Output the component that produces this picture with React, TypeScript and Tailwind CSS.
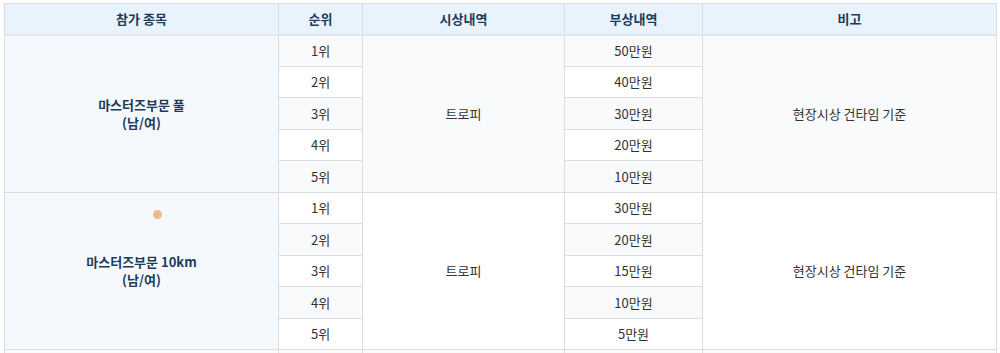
import React from 'react';

interface Group {
  name: string;
  sub: string;
  prize: string;
  amounts: string[];
  note: string;
  dot?: boolean;
}

const groups: Group[] = [
  {
    name: '마스터즈부문 풀',
    sub: '(남/여)',
    prize: '트로피',
    amounts: ['50만원', '40만원', '30만원', '20만원', '10만원'],
    note: '현장시상 건타임 기준',
  },
  {
    name: '마스터즈부문 10km',
    sub: '(남/여)',
    prize: '트로피',
    amounts: ['30만원', '20만원', '15만원', '10만원', '5만원'],
    note: '현장시상 건타임 기준',
    dot: true,
  },
];

const font = { fontFamily: '"Noto Sans CJK KR", "Noto Sans", sans-serif' };

export default function App() {
  let rowIndex = 0;

  return (
    <div className="bg-white w-[1000px] h-[353px] overflow-hidden pl-[4px] pt-[3px]" style={font}>
      <table className="w-[992px] table-fixed border-collapse text-[13px] text-[#333] text-center">
        <colgroup>
          <col className="w-[274px]" />
          <col className="w-[84px]" />
          <col className="w-[202px]" />
          <col className="w-[138px]" />
          <col className="w-[294px]" />
        </colgroup>
        <thead>
          <tr className="h-[31px] bg-[#e8f3fd] text-[#1d3b5c] font-bold">
            <th className="border border-[#dcdcdc] border-b-2 border-b-[#e3e6ea] font-bold">참가 종목</th>
            <th className="border border-[#dcdcdc] border-b-2 border-b-[#e3e6ea] font-bold">순위</th>
            <th className="border border-[#dcdcdc] border-b-2 border-b-[#e3e6ea] font-bold">시상내역</th>
            <th className="border border-[#dcdcdc] border-b-2 border-b-[#e3e6ea] font-bold">부상내역</th>
            <th className="border border-[#dcdcdc] border-b-2 border-b-[#e3e6ea] font-bold">비고</th>
          </tr>
        </thead>
        <tbody>
          {groups.map((g) =>
            g.amounts.map((amount, i) => {
              rowIndex += 1;
              const striped = rowIndex % 2 === 1;
              return (
                <tr key={g.name + i} className={striped ? 'h-[31.5px] bg-[#f9fafc]' : 'h-[31.5px] bg-white'}>
                  {i === 0 && (
                    <td rowSpan={5} className="relative border border-[#dcdcdc] bg-[#f5f9fd] font-bold text-[#1d3b5c] leading-[18px]">
                      {g.dot && (
                        <span className="absolute left-[148px] top-[17px] w-[9px] h-[9px] rounded-full bg-[#e9bc8c]" />
                      )}
                      <div>{g.name}</div>
                      <div>{g.sub}</div>
                    </td>
                  )}
                  <td className="border border-[#dcdcdc]">{i + 1}위</td>
                  {i === 0 && (
                    <td rowSpan={5} className="border border-[#dcdcdc]">
                      {g.prize}
                    </td>
                  )}
                  <td className="border border-[#dcdcdc]">{amount}</td>
                  {i === 0 && (
                    <td rowSpan={5} className="border border-[#dcdcdc]">
                      {g.note}
                    </td>
                  )}
                </tr>
              );
            })
          )}
          <tr className="h-[31.5px] bg-[#f9fafc]">
            <td className="border border-[#dcdcdc]" />
            <td className="border border-[#dcdcdc]" />
            <td className="border border-[#dcdcdc]" />
            <td className="border border-[#dcdcdc]" />
            <td className="border border-[#dcdcdc]" />
          </tr>
        </tbody>
      </table>
    </div>
  );
}
